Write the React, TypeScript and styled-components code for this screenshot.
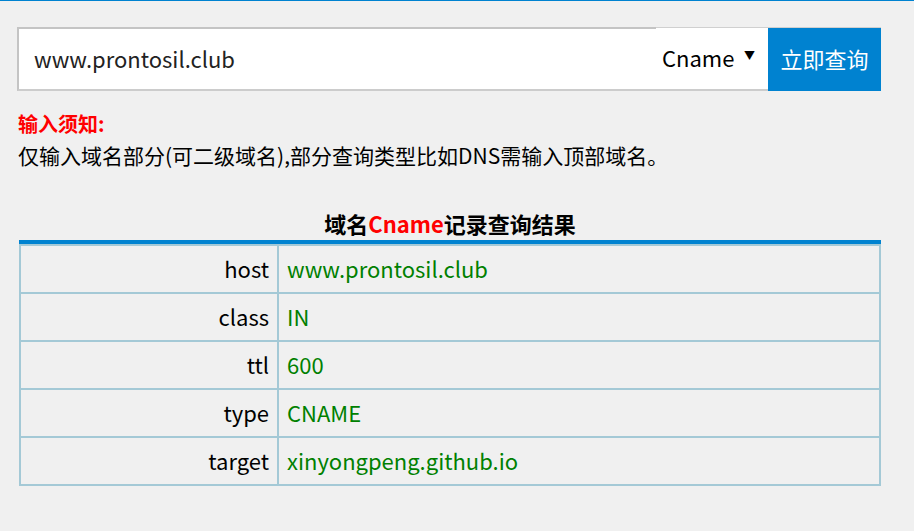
import React from 'react';
import styled, { createGlobalStyle } from 'styled-components';

const GlobalStyle = createGlobalStyle`
  html, body {
    margin: 0;
    padding: 0;
    background: #f0f0f0;
  }
  body {
    font-family: "Noto Sans CJK SC", "Noto Sans", sans-serif;
    color: #000;
    border-top: 1px solid #0082d0;
  }
`;

const records = [
  { key: 'host', value: 'www.prontosil.club' },
  { key: 'class', value: 'IN' },
  { key: 'ttl', value: '600' },
  { key: 'type', value: 'CNAME' },
  { key: 'target', value: 'xinyongpeng.github.io' },
];

function App() {
  return (
    <>
      <GlobalStyle />
      <Page>
        <SearchBar>
          <Input defaultValue="www.prontosil.club" />
          <TypeSelect>
            <span>Cname</span>
            <Arrow>▼</Arrow>
          </TypeSelect>
          <QueryButton>立即查询</QueryButton>
        </SearchBar>
        <Notice>
          <NoticeTitle>输入须知:</NoticeTitle>
          <NoticeText>仅输入域名部分(可二级域名),部分查询类型比如DNS需输入顶部域名。</NoticeText>
        </Notice>
        <ResultTable>
          <caption>
            域名<Red>Cname</Red>记录查询结果
          </caption>
          <tbody>
            {records.map((r) => (
              <tr key={r.key}>
                <KeyCell>{r.key}</KeyCell>
                <ValueCell>{r.value}</ValueCell>
              </tr>
            ))}
          </tbody>
        </ResultTable>
      </Page>
    </>
  );
}

const Page = styled.div`
  padding: 26px 0 40px 17px;
  width: 864px;
`;

const SearchBar = styled.div`
  display: flex;
  height: 64px;
`;

const Input = styled.input`
  flex: 1;
  min-width: 0;
  height: 64px;
  box-sizing: border-box;
  border: 2px solid #cccccc;
  border-top-color: #c4c4c4;
  border-left-color: #c4c4c4;
  border-right: none;
  background: #fff;
  padding: 0 0 3px 15px;
  font-family: "Noto Sans CJK SC", sans-serif;
  font-size: 22px;
  color: #222;
  outline: none;
`;

const TypeSelect = styled.div`
  width: 112px;
  box-sizing: border-box;
  display: flex;
  align-items: center;
  justify-content: space-between;
  background: #fff;
  border-top: 1px solid #d0d0d0;
  border-bottom: 2px solid #cccccc;
  padding: 0 13px 3px 6px;
  font-size: 22px;
  color: #000;
`;

const Arrow = styled.span`
  font-size: 11px;
  margin-top: -4px;
`;

const QueryButton = styled.button`
  width: 113px;
  height: 64px;
  border: none;
  border-top: 1px solid #cfcfcf;
  background: #0082d0;
  color: #fff;
  font-family: "Noto Sans CJK SC", sans-serif;
  font-size: 22px;
  padding: 0 0 4px;
`;

const Notice = styled.div`
  margin-top: 18px;
  padding-left: 1px;
`;

const NoticeTitle = styled.div`
  color: #ff0000;
  font-weight: bold;
  font-size: 20px;
  line-height: 30px;
`;

const NoticeText = styled.div`
  font-size: 21px;
  line-height: 32px;
`;

const ResultTable = styled.table`
  margin: 38px 0 0 2px;
  width: 862px;
  border-collapse: collapse;
  font-size: 22px;

  caption {
    font-weight: bold;
    font-size: 22px;
    line-height: 28px;
    padding-bottom: 3px;
    border-bottom: 4px solid #0082d0;
  }

  td {
    border: 2px solid #a4c9d6;
    height: 48px;
    box-sizing: border-box;
    padding: 0 8px 2px;
  }
`;

const KeyCell = styled.td`
  width: 258px;
  text-align: right;
`;

const ValueCell = styled.td`
  color: #008000;
  text-align: left;
`;

const Red = styled.span`
  color: #ff0000;
`;

export default App;
